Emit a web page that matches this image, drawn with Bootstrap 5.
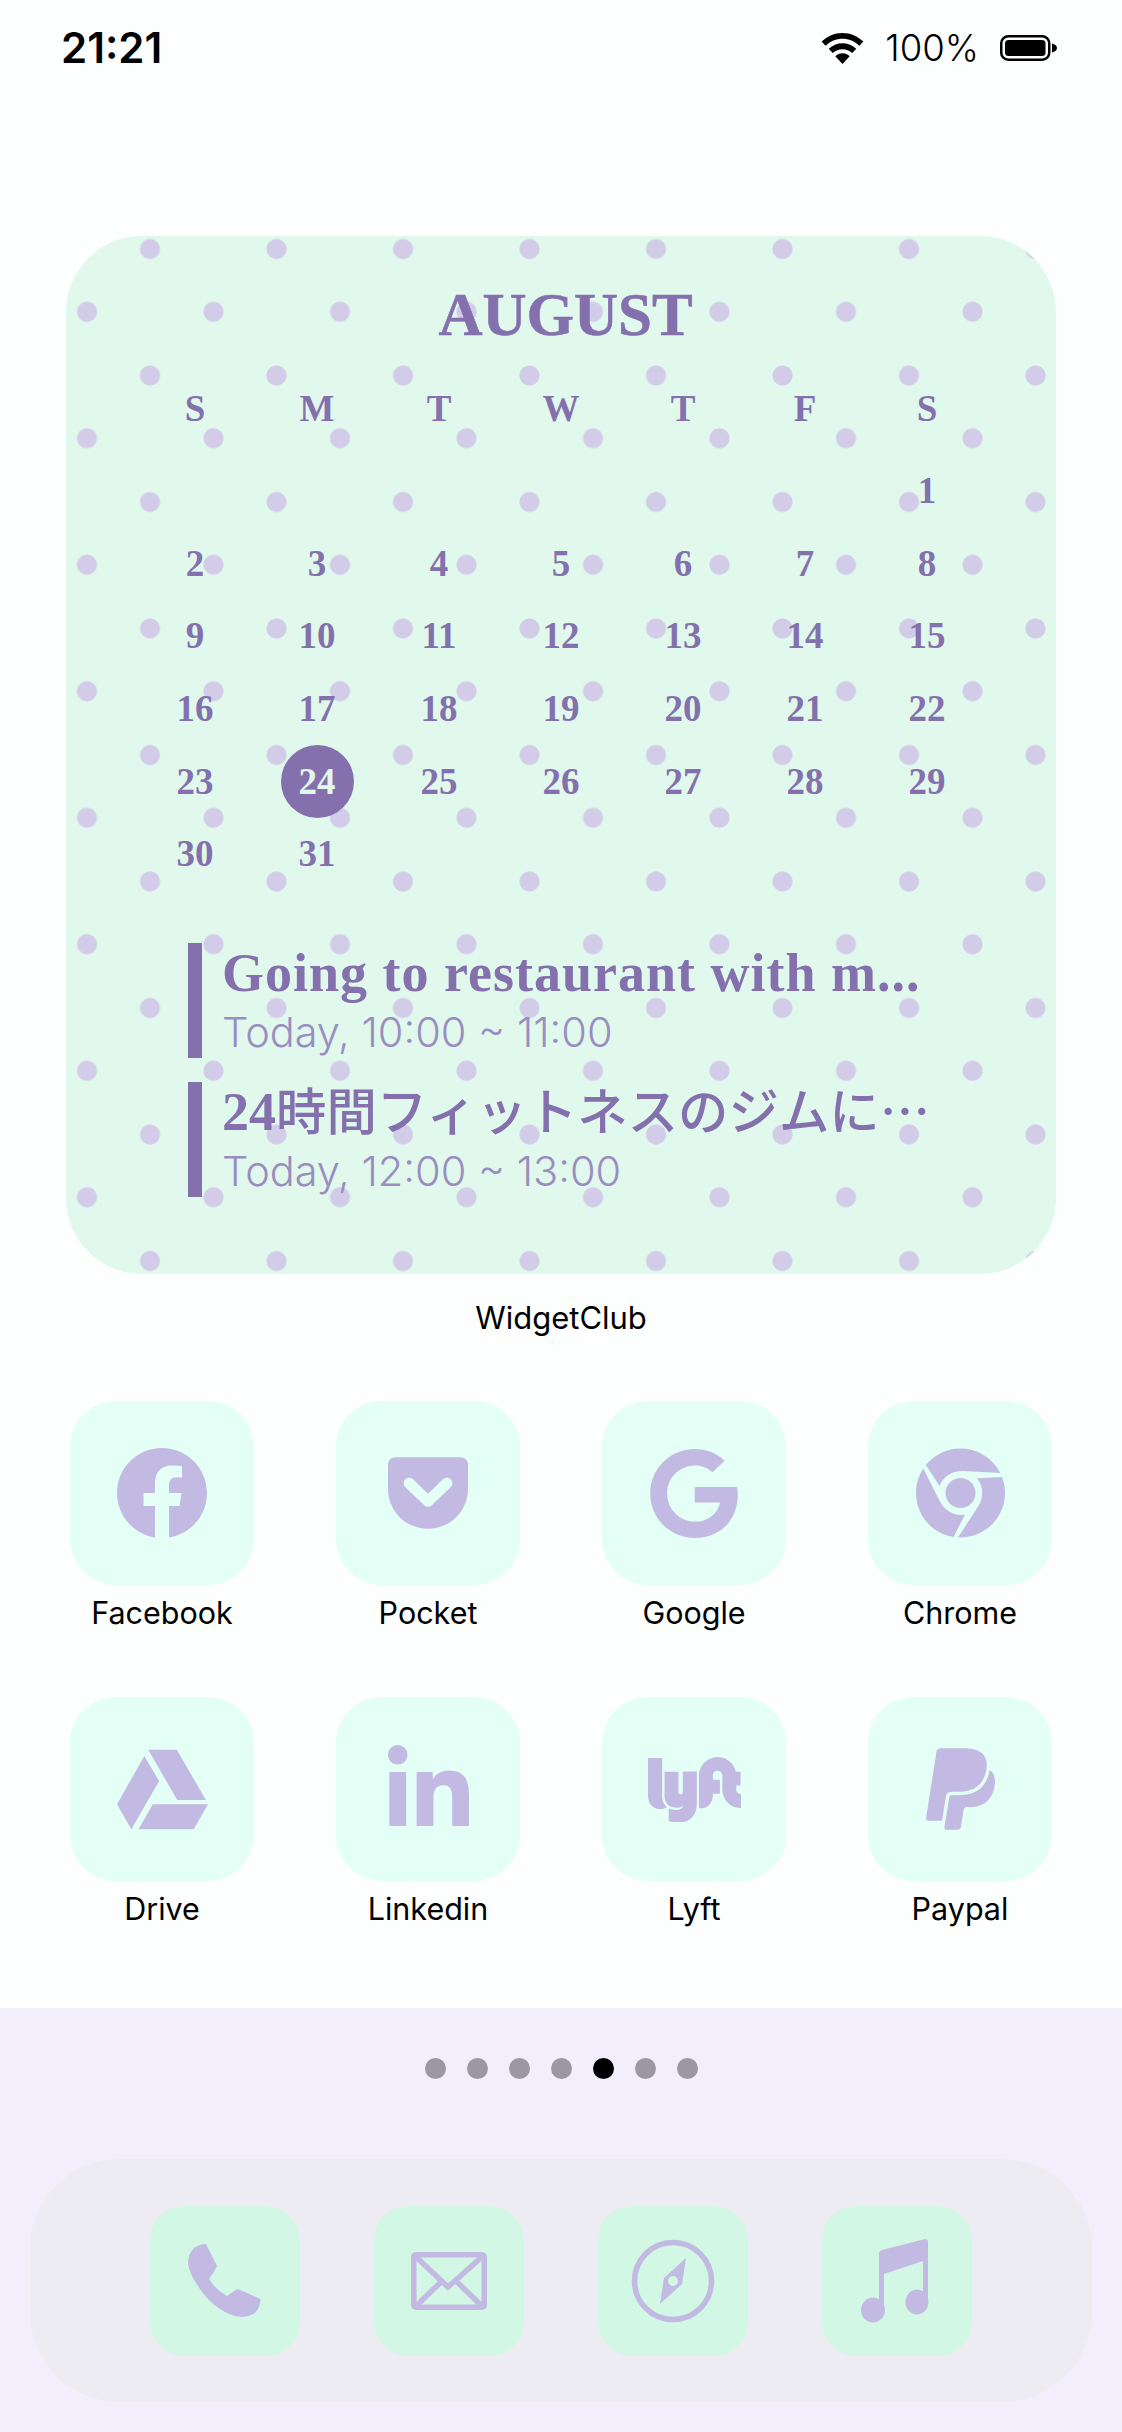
<!DOCTYPE html>
<html lang="en">
<head>
    <meta charset="UTF-8">
    <meta name="viewport" content="width=device-width, initial-scale=1.0">
    <title>Home screen</title>
    <link rel="stylesheet" href="https://cdn.jsdelivr.net/npm/bootstrap@5.3.2/dist/css/bootstrap.min.css">
    <style>
        body { background: #fdfffe; color: #000; font-family: Inter, "Liberation Sans", sans-serif; }
        .screen { width: 1122px; height: 2432px; overflow: hidden; }
        .top-zone { height: 2008px; }
        .status-row { height: 96px; padding: 0 65px 0 61px; }
        .status-time { font: 600 42px/1 Inter, "Liberation Sans", sans-serif; }
        .status-batt { font-size: 36.5px; line-height: 1; font-weight: 300; }
        .status-icons { gap: 21px; }

        .cal-widget {
            width: 990px; height: 1038px; margin: 140px auto 0; padding: 48px 0 0 68px; border-radius: 76px;
            color: #8570ae; font-family: "Liberation Serif", "Noto Sans CJK JP", serif;
            background-color: #e0f9ec;
            background-image: radial-gradient(circle, #d3cce9 9.5px, transparent 10.5px), radial-gradient(circle, #d3cce9 9.5px, transparent 10.5px);
            background-size: 126.5px 126.5px;
            background-position: 20.75px -50.25px, -42.25px 12.5px;
        }
        .cal-title { width: 854px; font-size: 61px; line-height: 62px; font-weight: 700; margin-bottom: 26px; -webkit-text-stroke: 0.6px #8570ae; padding-left: 9px; }
        .cal-grid { width: 854px; display: grid; grid-template-columns: repeat(7, 122px); grid-auto-rows: 72.6px; font-weight: 700; font-size: 37px; }
        .cal-head { margin-bottom: 10px; }
        .cal-cell { display: flex; align-items: center; justify-content: center; }
        .cal-today { width: 73px; height: 73px; background: #8570ae; color: #e0f9ec; }
        .event-list { margin: 53px 0 0 54px; gap: 24px; }
        .event-row { height: 115px; gap: 20px; }
        .event-bar { width: 14px; background: #8570ae; }
        .event-name { font-size: 54px; line-height: 60px; font-weight: 700; white-space: nowrap; letter-spacing: 1px; }
        .event-name.cjk { letter-spacing: 0; }
        .event-name.cjk span { font: 500 50.4px/1 "Noto Sans CJK JP", sans-serif; }
        .event-when { font: 300 41.5px/58px Inter, "Liberation Sans", sans-serif; color: #9a8dc0; }

        .widget-name { font-size: 31px; line-height: 36px; margin-top: 26px; }
        .app-grid { width: 982px; margin: 65px auto 0 70px; row-gap: 66px; column-gap: 82px; display: grid; grid-template-columns: repeat(4, 184px); }
        .app-tile { width: 184px; height: 184px; border-radius: 46px; background: #e3fff6; }
        .app-label { font-size: 30.5px; line-height: 36px; margin-top: 10px; white-space: nowrap; }
        .glyph { fill: #c3bae3; }

        .dock-zone { height: 424px; background: #f3eefc; padding-top: 50px; }
        .page-dots { gap: 21px; }
        .page-dot { width: 21px; height: 21px; background: #9b98a4; }
        .page-dot.on { background: #000; }
        .dock-bar { width: 1062px; height: 243px; margin: 80px 0 0 30px; border-radius: 90px; background: #eeecf3; gap: 74px; padding-left: 120px; }
        .dock-tile { width: 150px; height: 150px; border-radius: 34px; background: #d2f7e5; }
    </style>
</head>
<body class="m-0">
<div class="screen d-flex flex-column">
    <div class="top-zone">
        <div class="status-row d-flex justify-content-between align-items-center">
            <div class="status-time">21:21</div>
            <div class="status-icons d-flex align-items-center">
                <svg width="43" height="31" viewBox="0 0 43 32"><path fill="#000" d="M21.5 0C13 0 6 3.300 0 8.800l4 4.400C9 8.700 15 6 21.500 6S34 8.700 39 13.200l4-4.400C37 3.300 30 0 21.500 0zM21.500 10.500c-5.500 0-10.200 2.100-14.200 5.700l4.100 4.500c2.800-2.500 6.200-4 10.100-4s7.300 1.500 10.100 4l4.100-4.500c-4-3.600-8.700-5.700-14.200-5.700zM21.500 21c-3 0-5.400 1.100-7.400 2.900L21.500 32l7.400-8.100C26.900 22.100 24.500 21 21.500 21z"/></svg>
                <div class="status-batt">100%</div>
                <svg width="57" height="26" viewBox="0 0 57 26"><rect x="1.250" y="1.250" width="48" height="23.500" rx="7" fill="none" stroke="#000" stroke-width="2.500"/><rect x="5" y="5" width="40.500" height="16" rx="3.500" fill="#000"/><path fill="#000" d="M52 8.500c3 .8 5 2.500 5 4.500s-2 3.700-5 4.500z"/></svg>
            </div>
        </div>

        <div class="cal-widget">
            <div class="cal-title text-center">AUGUST</div>
            <div class="cal-grid cal-head">
                <div class="cal-cell">S</div><div class="cal-cell">M</div><div class="cal-cell">T</div><div class="cal-cell">W</div><div class="cal-cell">T</div><div class="cal-cell">F</div><div class="cal-cell">S</div>
            </div>
            <div class="cal-grid">
                <div></div><div></div><div></div><div></div><div></div><div></div><div class="cal-cell">1</div>
                <div class="cal-cell">2</div><div class="cal-cell">3</div><div class="cal-cell">4</div><div class="cal-cell">5</div><div class="cal-cell">6</div><div class="cal-cell">7</div><div class="cal-cell">8</div>
                <div class="cal-cell">9</div><div class="cal-cell">10</div><div class="cal-cell">11</div><div class="cal-cell">12</div><div class="cal-cell">13</div><div class="cal-cell">14</div><div class="cal-cell">15</div>
                <div class="cal-cell">16</div><div class="cal-cell">17</div><div class="cal-cell">18</div><div class="cal-cell">19</div><div class="cal-cell">20</div><div class="cal-cell">21</div><div class="cal-cell">22</div>
                <div class="cal-cell">23</div><div class="cal-cell"><span class="cal-today rounded-circle d-flex align-items-center justify-content-center">24</span></div><div class="cal-cell">25</div><div class="cal-cell">26</div><div class="cal-cell">27</div><div class="cal-cell">28</div><div class="cal-cell">29</div>
                <div class="cal-cell">30</div><div class="cal-cell">31</div>
            </div>
            <div class="event-list d-flex flex-column">
                <div class="event-row d-flex">
                    <div class="event-bar"></div>
                    <div>
                        <div class="event-name">Going to restaurant with m...</div>
                        <div class="event-when">Today, 10:00 ~ 11:00</div>
                    </div>
                </div>
                <div class="event-row d-flex">
                    <div class="event-bar"></div>
                    <div>
                        <div class="event-name cjk">24<span>時間フィットネスのジムに…</span></div>
                        <div class="event-when">Today, 12:00 ~ 13:00</div>
                    </div>
                </div>
            </div>
        </div>
        <div class="widget-name text-center">WidgetClub</div>

        <div class="app-grid">
            <div class="d-flex flex-column align-items-center">
                <div class="app-tile d-flex align-items-center justify-content-center">
                    <svg class="glyph" width="90" height="90" viewBox="8 8 496 496"><path d="M504 256C504 119 393 8 256 8S8 119 8 256c0 123.780 90.690 226.380 209.250 245V327.690h-63V256h63v-54.640c0-62.150 37-96.480 93.670-96.480 27.140 0 55.520 4.840 55.520 4.840v61h-31.280c-30.800 0-40.410 19.120-40.410 38.730V256h68.780l-11 71.690h-57.780V501C413.310 482.380 504 379.780 504 256z"/></svg>
                </div>
                <div class="app-label">Facebook</div>
            </div>
            <div class="d-flex flex-column align-items-center">
                <div class="app-tile d-flex align-items-center justify-content-center">
                    <svg class="glyph" width="80" height="74" viewBox="0 64 448 400"><path d="M407.600 64h-367C18.500 64 0 82.500 0 104.600v135.200C0 364.500 99.700 464 224.200 464c124 0 223.800-99.500 223.800-224.200V104.600c0-22.400-17.700-40.600-40.400-40.600zm-162 268.500c-12.400 11.800-31.400 11.100-42.400 0C89.500 223.600 88.300 227.400 88.300 209.300c0-16.900 13.800-30.700 30.700-30.700 17 0 16.100 3.800 105.200 89.300 90.600-86.900 88.600-89.300 105.500-89.300 16.900 0 30.700 13.800 30.700 30.700 0 17.800-2.900 15.700-114.800 123.200z"/></svg>
                </div>
                <div class="app-label">Pocket</div>
            </div>
            <div class="d-flex flex-column align-items-center">
                <div class="app-tile d-flex align-items-center justify-content-center">
                    <svg class="glyph" width="88" height="89" viewBox="0 8 488 496"><path d="M488 261.800C488 403.300 391.100 504 248 504 110.800 504 0 393.200 0 256S110.800 8 248 8c66.800 0 123 24.500 166.300 64.900l-67.500 64.900C258.500 52.600 94.300 116.600 94.300 256c0 86.500 69.100 156.600 153.700 156.600 98.200 0 135-70.400 140.800-106.900H248v-85.300h236.100c2.300 12.700 3.900 24.900 3.900 41.400z"/></svg>
                </div>
                <div class="app-label">Google</div>
            </div>
            <div class="d-flex flex-column align-items-center">
                <div class="app-tile d-flex align-items-center justify-content-center">
                    <svg class="glyph" width="89" height="90" viewBox="0 8 496 496"><path d="M131.500 217.500L55.100 100.100c47.600-59.200 119-91.800 192-92.100 42.300-.3 85.500 10.500 124.800 33.200 43.400 25.200 76.400 61.400 97.400 103L264 133.400c-58.100-3.400-113.400 29.300-132.500 84.100zm32.900 38.500c0 46.200 37.400 83.600 83.600 83.600s83.600-37.400 83.600-83.600-37.400-83.600-83.600-83.600-83.600 37.300-83.600 83.600zm314.900-89.200L339.600 174c37.900 44.300 38.500 108.200 6.600 157.200L234.100 503.600c46.500 2.500 94.400-7.700 137.800-32.900 107.400-62 150.900-192 107.400-303.900zM133.700 303.600L40.400 120.100C14.900 159.100 0 205.900 0 256c0 124 90.800 226.700 209.500 244.900l63.700-124.800c-57.600 10.800-113.200-20.800-139.500-72.500z"/></svg>
                </div>
                <div class="app-label">Chrome</div>
            </div>
            <div class="d-flex flex-column align-items-center">
                <div class="app-tile d-flex align-items-center justify-content-center">
                    <svg class="glyph" width="91" height="81" viewBox="0 32 512 448"><path d="M339 314.900L175.400 32h161.200l163.600 282.900H339zm-137.500 23.600L120.900 480h310.500L512 338.500H201.500zM154.100 67.400L0 338.500 80.600 480 237 208.800 154.100 67.400z"/></svg>
                </div>
                <div class="app-label">Drive</div>
            </div>
            <div class="d-flex flex-column align-items-center">
                <div class="app-tile d-flex align-items-center justify-content-center">
                    <svg class="glyph mb-2" width="81" height="81" viewBox="0 0 448 448"><path d="M100.280 448H7.400V148.900h92.880zM53.790 108.100C24.090 108.100 0 83.500 0 53.800a53.790 53.790 0 0 1 107.580 0c0 29.700-24.100 54.300-53.790 54.300zM447.900 448h-92.680V302.400c0-34.700-.7-79.200-48.290-79.200-48.290 0-55.690 37.700-55.690 76.700V448h-92.780V148.900h89.080v40.800h1.300c12.400-23.500 42.690-48.300 87.880-48.300 94 0 111.280 61.900 111.280 142.300V448z"/></svg>
                </div>
                <div class="app-label">Linkedin</div>
            </div>
            <div class="d-flex flex-column align-items-center">
                <div class="app-tile d-flex align-items-center justify-content-center">
                    <svg class="glyph" width="93" height="65" viewBox="0 75 512 358"><path d="M0 81.100h77.800v208.700c0 33.100 15 52.800 27.200 61-12.700 11.100-51.200 20.900-80.200-2.800C7.800 334 0 310.700 0 289V81.100zm485.900 173.500v-22h23.800v-76.800h-26.100c-10.100-46.300-51.200-80.700-100.300-80.700-56.600 0-102.700 46-102.700 102.700V357c16 2.300 35.400-.3 51.700-14 17.100-14 24.800-37.200 24.800-59v-6.700h38.800v-76.800h-38.800v-23.300c0-34.600 52.200-34.600 52.200 0v77.100c0 56.600 46 102.700 102.700 102.700v-76.500c-14.500 0-26.100-11.700-26.100-26.100zm-294.300-99v113c0 15.400-23.800 15.400-23.800 0v-113H91v132.700c0 23.800 8 54 45 63.900 37 9.800 58.200-10.600 58.200-10.600-2.100 13.400-14.500 23.300-34.900 25.300-15.500 1.600-35.300-3.600-45-7.800v70.300c25.100 7.500 51.500 9.800 77.600 4.700 47.100-9.100 76.800-48.400 76.800-100.800V155.100h-77.100v.5z"/></svg>
                </div>
                <div class="app-label">Lyft</div>
            </div>
            <div class="d-flex flex-column align-items-center">
                <div class="app-tile d-flex align-items-center justify-content-center">
                    <svg class="glyph" width="69" height="82" viewBox="0 29 384 454"><path d="M111.400 295.900c-3.500 19.200-17.400 108.700-21.500 134-.3 1.800-1 2.500-3 2.500H12.300c-7.600 0-13.100-6.600-12.100-13.900L58.800 46.600C60.300 37 68.900 29.500 78.800 29.500c152.300 0 165.100-3.700 204 11.400 60.100 23.300 65.600 79.500 44 140.300-21.500 62.600-72.500 89.500-140.100 90.300-43.400.7-69.500-7-75.300 24.200zM357.100 152c-1.800-1.300-2.500-1.800-3 1.300-2 11.400-5.100 22.500-8.800 33.600-39.900 113.800-150.500 103.900-204.500 103.900-6.100 0-10.100 3.300-10.900 9.400-22.600 140.400-27.100 169.700-27.100 169.700-1 7.100 3.500 12.900 10.600 12.900h63.500c8.600 0 15.700-6.300 17.400-14.900.7-5.400-1.100 6.100 14.400-91.300 4.600-22 14.300-19.700 29.300-19.700 71 0 126.400-28.800 142.900-112.300 6.500-34.800 4.600-71.400-23.800-92.600z"/></svg>
                </div>
                <div class="app-label">Paypal</div>
            </div>
        </div>
    </div>

    <div class="dock-zone">
        <div class="page-dots d-flex justify-content-center">
            <div class="page-dot rounded-circle"></div>
            <div class="page-dot rounded-circle"></div>
            <div class="page-dot rounded-circle"></div>
            <div class="page-dot rounded-circle"></div>
            <div class="page-dot on rounded-circle"></div>
            <div class="page-dot rounded-circle"></div>
            <div class="page-dot rounded-circle"></div>
        </div>
        <div class="dock-bar d-flex align-items-center">
            <div class="dock-tile">
                <svg class="glyph" width="150" height="150" viewBox="0 0 150 150"><path d="M56 38L67 60Q63 68 59 73Q66 84 77 90Q82 86 88 83L110.500 93Q110 102 105 107Q98 111 92 111Q80 110 70 103Q58 95 50 83Q39 68 38 57Q38 48 44 42Q50 38 56 38z"/></svg>
            </div>
            <div class="dock-tile">
                <svg width="150" height="150" viewBox="0 0 150 150" fill="none" stroke="#c3bae3" stroke-width="5.500"><rect x="39.750" y="48.750" width="70.500" height="52.500" rx="2"/><path d="M40 49L74 81L110 49M42 100L67 76M108 100L83 76"/></svg>
            </div>
            <div class="dock-tile">
                <svg width="150" height="150" viewBox="0 0 150 150"><circle cx="75" cy="75" r="38.500" fill="none" stroke="#c3bae3" stroke-width="5.500"/><path class="glyph" fill-rule="evenodd" d="M88 52L84 78L62 98L66 72zM75 70a5 5 0 1 0 .01 0z"/></svg>
            </div>
            <div class="dock-tile">
                <svg class="glyph" width="150" height="150" viewBox="0 0 150 150"><path d="M57 48Q57 45 60 44L103 33Q106 33 106 36V96H101V55L62 68V104H57z"/><ellipse cx="51" cy="104" rx="12" ry="12.500"/><ellipse cx="95" cy="96" rx="11.500" ry="12.500"/></svg>
            </div>
        </div>
    </div>
</div>
<script src="https://cdn.jsdelivr.net/npm/bootstrap@5.3.2/dist/js/bootstrap.bundle.min.js"></script>
</body>
</html>
